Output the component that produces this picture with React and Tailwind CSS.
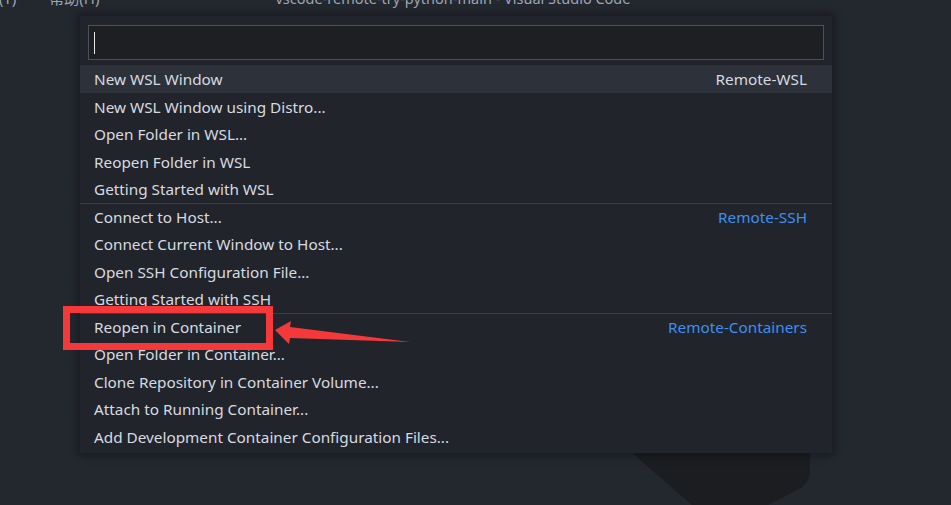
import React from 'react'

const groups = [
  {
    label: 'Remote-WSL',
    items: ['New WSL Window', 'New WSL Window using Distro...', 'Open Folder in WSL...', 'Reopen Folder in WSL', 'Getting Started with WSL'],
  },
  {
    label: 'Remote-SSH',
    items: ['Connect to Host...', 'Connect Current Window to Host...', 'Open SSH Configuration File...', 'Getting Started with SSH'],
  },
  {
    label: 'Remote-Containers',
    items: ['Reopen in Container', 'Open Folder in Container...', 'Clone Repository in Container Volume...', 'Attach to Running Container...', 'Add Development Container Configuration Files...'],
  },
]

function Row({ text, label, first, separator, active }) {
  return (
    <div
      className={`h-[27.5px] flex items-center justify-between pl-[14px] pr-[25px] pt-[2px] ${separator ? 'border-t border-[#3a3f47]' : ''} ${active ? 'bg-[#2c313a]' : ''}`}
    >
      <span className="text-[#d7dae0]">{text}</span>
      {first && (
        <span className={active ? 'text-[#d7dae0]' : 'text-[#3d8ef0]'}>{label}</span>
      )}
    </div>
  )
}

export default function App() {
  return (
    <div className="relative w-[951px] h-[505px] overflow-hidden bg-[#23272e] font-['Noto_Sans','Noto_Sans_CJK_SC',sans-serif] text-[15.3px]">
      {/* title bar, mostly cut off */}
      <div className="h-[8px] overflow-hidden">
        <div className="-mt-[12px] flex items-start text-[15px] leading-[20px] text-[#9da5b4] whitespace-nowrap">
          <span className="-ml-[31px]">终端(T)</span>
          <span className="ml-[33px]">帮助(H)</span>
          <span className="ml-[176px] text-[14.5px]">vscode-remote-try-python-main - Visual Studio Code</span>
        </div>
      </div>

      {/* vscode watermark */}
      <svg className="absolute left-0 top-0" width="951" height="505" viewBox="0 0 951 505">
        <path d="M560 380 L810 380 L810 470 Q810 484 797 490 L768 505 L692 505 L560 390 Z" fill="#1b1d21" />
      </svg>

      {/* quick pick */}
      <div className="relative ml-[80px] mt-[8px] w-[752px] bg-[#21252b] pt-[9px] pb-[3px] shadow-[0_0_8px_2px_rgba(0,0,0,0.36)]">
        <div className="mx-[8px] h-[35px] border border-[#4b5059] bg-[#1d1f23] flex items-center pl-[5px]">
          <div className="w-px h-[22px] bg-[#e6e6e6]" />
        </div>
        <div className="mt-[5px]">
          {groups.map((g, gi) =>
            g.items.map((it, i) => (
              <Row
                key={it}
                text={it}
                label={g.label}
                first={i === 0}
                separator={i === 0 && gi > 0}
                active={gi === 0 && i === 0}
              />
            ))
          )}
        </div>
      </div>

      {/* annotation */}
      <div className="absolute left-[63px] top-[306px] w-[210px] h-[44px] border-[7px] border-[#f5393b]" />
      <svg className="absolute left-0 top-0 pointer-events-none" width="951" height="505" viewBox="0 0 951 505">
        <polygon points="275,330 291,321 290,327 410,342 290,338 289,344" fill="#f5393b" />
      </svg>
    </div>
  )
}
